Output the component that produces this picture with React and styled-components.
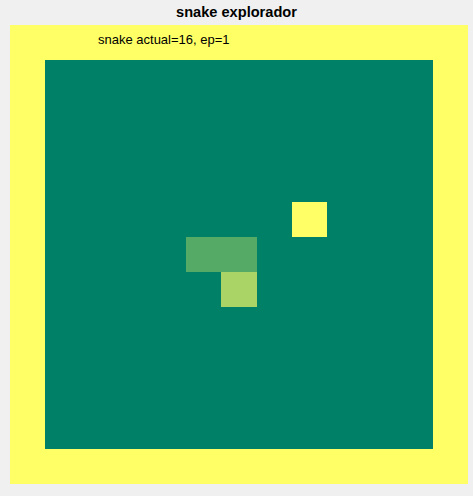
import React from 'react';
import styled, { createGlobalStyle } from 'styled-components';

// summer colormap: valor 0..1 -> verde a amarillo
const summer = (v) =>
  `rgb(${Math.round(255 * v)}, ${Math.round(255 * (0.5 + v / 2))}, 102)`;

const N = 13;

const buildBoard = () => {
  const board = [];
  for (let r = 0; r < N; r++) {
    const row = [];
    for (let c = 0; c < N; c++) {
      const border = r === 0 || c === 0 || r === N - 1 || c === N - 1;
      row.push(border ? 1 : 0);
    }
    board.push(row);
  }
  board[5][8] = 1; // comida
  board[6][5] = 1 / 3; // cuerpo
  board[6][6] = 1 / 3;
  board[7][6] = 2 / 3; // cabeza
  return board;
};

const GlobalStyle = createGlobalStyle`
  html, body {
    margin: 0;
    padding: 0;
    background: #f0f0f0;
  }
`;

const Figure = styled.div`
  width: 473px;
  height: 496px;
  background: #f0f0f0;
  display: flex;
  flex-direction: column;
  font-family: 'Liberation Sans', Arial, sans-serif;
`;

const Title = styled.div`
  height: 25px;
  line-height: 25px;
  text-align: center;
  font-size: 14.6px;
  font-weight: bold;
  color: #000;
`;

const Axes = styled.div`
  position: relative;
  margin-left: 10px;
  width: 458px;
  height: 459px;
  display: grid;
  grid-template-columns: repeat(${N}, 1fr);
  grid-template-rows: repeat(${N}, 1fr);
`;

const Cell = styled.div`
  background: ${(props) => summer(props.$v)};
`;

const Label = styled.div`
  position: absolute;
  left: 88px;
  top: 8px;
  font-size: 13px;
  line-height: 13px;
  color: #000;
  white-space: nowrap;
`;

const App = () => {
  const board = buildBoard();

  return (
    <>
      <GlobalStyle />
      <Figure>
        <Title>snake explorador</Title>
        <Axes>
          {board.flatMap((row, r) =>
            row.map((v, c) => <Cell key={`${r}-${c}`} $v={v} />)
          )}
          <Label>snake actual=16, ep=1</Label>
        </Axes>
      </Figure>
    </>
  );
};

export default App;
